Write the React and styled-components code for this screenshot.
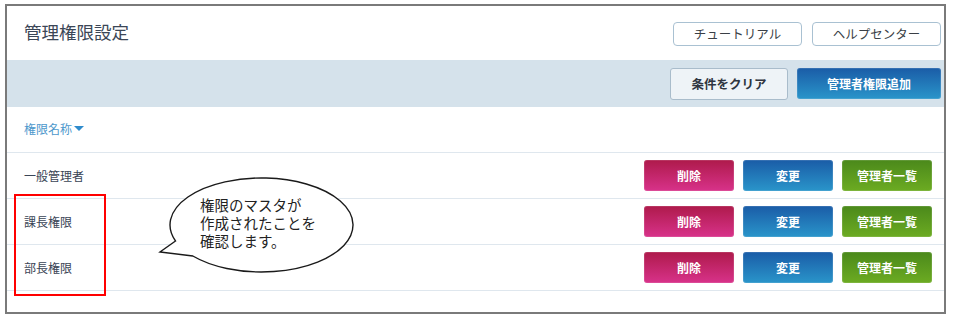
import React from "react";
import styled, { createGlobalStyle, css } from "styled-components";

const Global = createGlobalStyle`
  html, body { margin: 0; padding: 0; background: #ffffff; }
  body { font-family: "Noto Sans CJK JP", "Noto Sans", sans-serif; }
  * { box-sizing: border-box; }
`;

const Page = styled.div`
  position: relative;
  width: 955px;
  height: 322px;
  overflow: hidden;
`;

const Frame = styled.div`
  margin: 4px 0 0 5px;
  width: 941px;
  height: 310px;
  border: 2px solid #7a7a7a;
  background: #fff;
  display: flex;
  flex-direction: column;
`;

const Header = styled.div`
  height: 54px;
  display: flex;
  align-items: center;
  justify-content: space-between;
  padding: 0 3px 0 17px;
`;

const Title = styled.h1`
  margin: 0 0 3px 0;
  font-size: 17.5px;
  font-weight: 400;
  color: #3b4656;
  letter-spacing: 0;
`;

const ButtonRow = styled.div`
  display: flex;
  gap: ${(p) => p.$gap || 9}px;
  align-items: center;
`;

const LinkButton = styled.button`
  width: 129px;
  height: 24px;
  margin-top: 2px;
  background: #fff;
  border: 1px solid #a9c1d2;
  border-radius: 4px;
  font-family: inherit;
  font-size: 12.5px;
  color: #3a3f46;
  padding: 0;
  line-height: 22px;
`;

const Band = styled.div`
  height: 47px;
  background: #d5e2eb;
  display: flex;
  align-items: center;
  justify-content: flex-end;
  padding: 0 3px 0 0;
`;

const ClearButton = styled.button`
  width: 118px;
  height: 32px;
  background: #eef3f7;
  border: 1px solid #a9bccb;
  border-radius: 3px;
  font-family: inherit;
  font-size: 12.5px;
  font-weight: 700;
  color: #2f3540;
  padding: 0;
`;

const gradients = {
  red: css`background: linear-gradient(#ae1a4b, #d8328a);`,
  blue: css`background: linear-gradient(#1a5ca7, #2a95ca);`,
  green: css`background: linear-gradient(#4b891b, #6cab22);`,
};

const SolidButton = styled.button`
  width: ${(p) => p.$w || 90}px;
  height: ${(p) => p.$h || 31}px;
  ${(p) => gradients[p.$tone]}
  border: none;
  border-radius: 3px;
  font-family: inherit;
  font-size: 12px;
  font-weight: 700;
  color: #fff;
  padding: 0;
  box-shadow: inset 0 0 0 1px rgba(255,255,255,0.12);
`;

const SortHeader = styled.div`
  height: 46px;
  display: flex;
  align-items: center;
  padding: 0 0 3px 17px;
  border-bottom: 1px solid #dfe7ee;
  font-size: 12px;
  color: #4e98cc;
  gap: 2px;
`;

const Caret = styled.span`
  width: 0;
  height: 0;
  border-left: 5px solid transparent;
  border-right: 5px solid transparent;
  border-top: 5px solid #2f8bcc;
  margin-top: 1px;
`;

const Row = styled.div`
  height: 46px;
  display: flex;
  align-items: center;
  justify-content: space-between;
  padding: 0 12px 0 17px;
  border-bottom: 1px solid #dfe7ee;
`;

const Name = styled.span`
  font-size: 12px;
  color: #3a4556;
`;

const Highlight = styled.div`
  position: absolute;
  left: 14px;
  top: 194px;
  width: 92px;
  height: 102px;
  border: 2.5px solid #f00;
`;

const Bubble = styled.div`
  position: absolute;
  left: 150px;
  top: 170px;
  width: 220px;
  height: 110px;
`;

const BubbleText = styled.div`
  position: absolute;
  left: 50px;
  top: 26px;
  display: flex;
  flex-direction: column;
`;

const BubbleLine = styled.span`
  display: block;
  font-size: 14.5px;
  line-height: 18px;
  height: 18px;
  color: #222;
  white-space: nowrap;
`;

const rows = ["一般管理者", "課長権限", "部長権限"];
const bubbleLines = ["権限のマスタが", "作成されたことを", "確認します。"];

export default function App() {
  return (
    <Page>
      <Global />
      <Frame>
        <Header>
          <Title>管理権限設定</Title>
          <ButtonRow $gap={10}>
            <LinkButton>チュートリアル</LinkButton>
            <LinkButton>ヘルプセンター</LinkButton>
          </ButtonRow>
        </Header>
        <Band>
          <ButtonRow $gap={9}>
            <ClearButton>条件をクリア</ClearButton>
            <SolidButton $tone="blue" $w={144} $h={31}>管理者権限追加</SolidButton>
          </ButtonRow>
        </Band>
        <SortHeader>
          権限名称<Caret />
        </SortHeader>
        {rows.map((r) => (
          <Row key={r}>
            <Name>{r}</Name>
            <ButtonRow $gap={9}>
              <SolidButton $tone="red">削除</SolidButton>
              <SolidButton $tone="blue">変更</SolidButton>
              <SolidButton $tone="green">管理者一覧</SolidButton>
            </ButtonRow>
          </Row>
        ))}
      </Frame>
      <Highlight />
      <Bubble>
        <svg width="220" height="110" viewBox="0 0 220 110">
          <path
            d="M 25.5 71 L 10 82 L 42.8 86 A 91.5 47 0 1 0 25.5 71 Z"
            fill="#fff"
            stroke="#1a1a1a"
            strokeWidth="1.4"
            strokeLinejoin="miter"
          />
        </svg>
        <BubbleText>
          {bubbleLines.map((l) => (
            <BubbleLine key={l}>{l}</BubbleLine>
          ))}
        </BubbleText>
      </Bubble>
    </Page>
  );
}
